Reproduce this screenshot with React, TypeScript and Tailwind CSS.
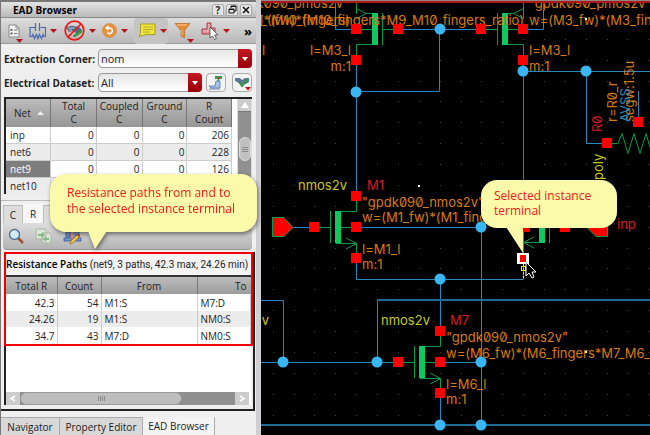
import type { ReactNode } from "react";

const sans = "font-['Open_Sans','Noto_Sans',sans-serif]";

const nets = [
  ["inp", "0", "0", "0", "206"],
  ["net6", "0", "0", "0", "228"],
  ["net9", "0", "0", "0", "126"],
  ["net10", "", "", "", ""],
];

const paths = [
  ["42.3", "54", "M1:S", "M7:D"],
  ["24.26", "19", "M1:S", "NM0:S"],
  ["34.7", "43", "M7:D", "NM0:S"],
];

function RedArrow({ low = false }: { low?: boolean }) {
  return (
    <svg viewBox="0 0 7 4" className={low ? "-ml-1 h-1 w-[7px] self-end" : "h-1 w-[7px]"}>
      <path d="M0 0h7L3.5 4z" fill="#b5121b" />
    </svg>
  );
}

function ReportIcon() {
  return (
    <svg viewBox="0 0 12 14" className="h-3.5 w-3">
      <path d="M1 1h7l3 3v9H1z" fill="#f2f2f2" stroke="#888" />
      <path d="M8 1v3h3" fill="none" stroke="#888" />
      <path d="M2.500 5h2v2h-2zM2.500 8.500h2v2h-2z" fill="#666" />
      <path d="M6 6h3.500M6 9.500h3.500" stroke="#777" />
    </svg>
  );
}

function ParasiticIcon() {
  return (
    <svg viewBox="0 0 17 18" className="h-[18px] w-[17px]">
      <path
        d="M6.500 1v8M10.500 1v8M6 5.500H1v9h2l1-2 1.500 4 2-4 1.500 4 1.500-4 2 4 1.500-4 .5 2h2v-9h-5"
        fill="none"
        stroke="#4467b0"
        strokeWidth="1.200"
      />
    </svg>
  );
}

function NoProbeIcon() {
  return (
    <svg viewBox="0 0 21 21" className="h-[21px] w-[21px]">
      <path d="M2 8q3-3 8-2l5 1 3 3-5 4-4-3-4 1z" fill="#52708c" />
      <path d="M4 8h7M5 10h3" stroke="#a9c3dd" />
      <path d="M9 16l8-6 1 2-7 5z" fill="#39a845" stroke="#187028" strokeWidth=".6" />
      <circle cx="10.500" cy="10.500" r="9.300" fill="none" stroke="#f31414" strokeWidth="1.700" />
      <path d="M4 17L17 4" stroke="#f31414" strokeWidth="1.700" />
    </svg>
  );
}

function RefreshIcon() {
  return (
    <svg viewBox="0 0 15 15" className="h-[15px] w-[15px]">
      <circle cx="7.500" cy="7.500" r="7" fill="#e79238" stroke="#c98b50" strokeWidth=".7" />
      <path d="M4.500 5h3.500a2.800 2.800 0 1 1-2.600 4.500" fill="none" stroke="#fff" strokeWidth="1.700" />
      <path d="M6.500 2v6L3 5z" fill="#fff" />
    </svg>
  );
}

function NoteIcon() {
  return (
    <svg viewBox="0 0 18 15" className="h-[15px] w-[18px]">
      <path d="M2.500 1h14.500v10.500H8l-7 2 1.500-3z" fill="#f2e53b" stroke="#a69a28" />
      <path d="M5 4h10M5 6.500h10M5 9h7" stroke="#b7a92c" />
    </svg>
  );
}

function FunnelIcon() {
  return (
    <svg viewBox="0 0 17 18" className="h-[18px] w-[17px]">
      <path d="M1 1.500h15l-5.500 7V16L7 14V8.500z" fill="#e58935" stroke="#b8702f" strokeWidth=".8" />
      <path d="M3 3h10" stroke="#ffd09a" />
      <path d="M8 8v5" stroke="#ffc184" />
    </svg>
  );
}

function SelectIcon() {
  return (
    <svg viewBox="0 0 18 18" className="h-[18px] w-[18px]">
      <path d="M6 1h4v5h4v6H1V7h5z" fill="#dd9298" stroke="#a93c48" />
      <path d="M2 9h9M8 2v6" stroke="#efc0c4" />
      <path d="M9 5v11l2.500-2 2 3.500 2-1-2-3.500h3.500z" fill="#fff" stroke="#444" strokeWidth=".8" />
    </svg>
  );
}

function ExportIcon() {
  return (
    <svg viewBox="0 0 16 16" className="h-4 w-4">
      <path d="M7 1h7v3H7z" fill="#3c9b50" />
      <path d="M9 2h3v2H9z" fill="#d33c3c" />
      <path d="M10.500 4v3" stroke="#3b8048" strokeWidth="1.500" />
      <path d="M8 6h4v7H3l-2-2h6z" fill="#a9c4e8" stroke="#5378a8" strokeWidth=".8" />
      <path d="M1 14h11" stroke="#6f86a5" />
    </svg>
  );
}

function CheckIcon() {
  return (
    <svg viewBox="0 0 17 16" className="h-4 w-[17px]">
      <path d="M1 3h5l2 2 3-2h4v4l-3 2H7L1 6z" fill="#5d7898" />
      <path d="M5 7l3 4 6-7" fill="none" stroke="#2f9845" strokeWidth="2" />
      <path d="M11 12h6l-3 3.500z" fill="#c1121b" />
    </svg>
  );
}

function SearchIcon() {
  return (
    <svg viewBox="0 0 16 16" className="h-4 w-4">
      <path d="M10 10l5 5" stroke="#98542d" strokeWidth="2.500" />
      <circle cx="6.500" cy="6.500" r="5" fill="#cfeafa" stroke="#50708f" strokeWidth="1.300" />
      <path d="M4 5q1-2 3-2" fill="none" stroke="#fff" />
    </svg>
  );
}

function CompareIcon() {
  return (
    <svg viewBox="0 0 17 16" className="h-4 w-[17px]">
      <path d="M1 1h8l2 2v8H1zM7 5h7l2 2v8H7z" fill="#dde5da" stroke="#a8b5a6" />
      <path d="M3 6h4V4l3 3-3 3V8H3zM14 10h-3V8l-3 3 3 3v-2h3z" fill="#83b987" />
    </svg>
  );
}

function EditIcon() {
  return (
    <svg viewBox="0 0 19 18" className="h-[18px] w-[19px]">
      <path d="M3 2h4v8H3zM12 2h4v8h-4zM1 11h17v3H1z" fill="#7195cf" stroke="#4567a5" />
      <path d="M8 1h2v11H8z" fill="#d7e4f5" stroke="#b93136" strokeWidth=".8" />
      <path d="M7 17l1-3 7-7 2 2-7 7z" fill="#f4c939" stroke="#9d6927" strokeWidth=".7" />
      <path d="M14 8l1-1 2 2-1 1z" fill="#d32626" />
    </svg>
  );
}

function ToolButton({ label, children, active = false }: { label: string; children: ReactNode; active?: boolean }) {
  return (
    <button
      aria-label={label}
      className={
        active
          ? "flex h-[26px] w-[34px] items-center justify-between rounded bg-[#c4c4c4] px-px pl-1"
          : "flex h-6 items-center gap-1"
      }
    >
      {children}
    </button>
  );
}

function Dropdown({ id, value, options, grow = false }: { id: string; value: string; options: string[]; grow?: boolean }) {
  return (
    <div className={grow ? "relative h-[19px] flex-1" : "relative h-[19px] w-[104px]"}>
      <select
        id={id}
        defaultValue={value}
        className="block h-full w-full appearance-none rounded border border-[#999] bg-linear-to-b from-[#e6e6e6] to-white px-[2px] text-[11px] leading-4 text-[#222]"
      >
        {options.map((o) => (
          <option key={o}>{o}</option>
        ))}
      </select>
      <span className="pointer-events-none absolute inset-y-0 right-0 flex w-3.5 items-center justify-center rounded-r bg-linear-to-b from-[#c41820] to-[#97000a]">
        <svg viewBox="0 0 6 4" className="h-1 w-1.5">
          <path d="M0 0h6L3 4z" fill="#fff" />
        </svg>
      </span>
    </div>
  );
}

function Sidebar() {
  return (
    <aside className={`${sans} flex w-[256px] shrink-0 flex-col border-l border-[#777] bg-[#efefef] text-[10px] leading-4 text-[#222]`}>
      <div className="h-0.5 bg-[#777]" />
      <header className="flex h-4 items-center border-b border-[#888] bg-linear-to-b from-[#e4e4e4] to-[#b9b9b9] pr-1 pl-3">
        <h1 className="flex-1 text-[10px] font-bold text-black">EAD Browser</h1>
        <div className="flex gap-0.5">
          <button aria-label="Help" className="h-3 w-3 rounded-xs border border-[#aaa] bg-[#e5e5e5] text-[10px] leading-[10px] font-bold">?</button>
          <button aria-label="Float" className="flex h-3 w-3 items-center justify-center rounded-xs border border-[#aaa] bg-[#e5e5e5]">
            <svg viewBox="0 0 9 9" className="h-[9px] w-[9px]">
              <path d="M3 3V1h5v5H6M1 4h5v4H1zM3 1.500h5M1 4.500h5" fill="none" stroke="#111" />
            </svg>
          </button>
          <button aria-label="Close" className="flex h-3 w-3 items-center justify-center rounded-xs border border-[#aaa] bg-[#e5e5e5]">
            <svg viewBox="0 0 8 8" className="h-2 w-2">
              <path d="M1 1l6 6M7 1L1 7" stroke="#111" strokeWidth="1.500" />
            </svg>
          </button>
        </div>
      </header>

      <div className="flex h-[26px] items-center justify-between border-b border-[#999] bg-linear-to-b from-[#ddd] to-[#b8b8b8] pr-1 pl-[7px]">
        <ToolButton label="Report">
          <span className="flex h-full items-center">
            <ReportIcon />
            <RedArrow low />
          </span>
        </ToolButton>
        <ToolButton label="Parasitics">
          <ParasiticIcon />
          <RedArrow />
        </ToolButton>
        <ToolButton label="Disable probes">
          <NoProbeIcon />
          <RedArrow />
        </ToolButton>
        <ToolButton label="Refresh">
          <RefreshIcon />
          <RedArrow />
        </ToolButton>
        <ToolButton label="Notes" active>
          <NoteIcon />
          <RedArrow />
        </ToolButton>
        <ToolButton label="Filter">
          <span className="flex h-full items-center">
            <FunnelIcon />
            <RedArrow low />
          </span>
        </ToolButton>
        <ToolButton label="Select">
          <SelectIcon />
          <RedArrow />
        </ToolButton>
        <button aria-label="More" className="ml-2 h-5 text-[13px] leading-4 font-bold text-black">»</button>
      </div>

      <div className="flex flex-col gap-[5px] py-[5px] pr-1 pl-[3px]">
        <div className="flex items-center">
          <label htmlFor="corner" className="w-[94px] font-bold whitespace-nowrap">Extraction Corner:</label>
          <Dropdown id="corner" value="nom" options={["nom", "max", "min"]} grow />
        </div>
        <div className="flex items-center">
          <label htmlFor="dataset" className="w-[94px] font-bold whitespace-nowrap">Electrical Dataset:</label>
          <Dropdown id="dataset" value="All" options={["All", "None"]} />
          <span className="flex flex-1 justify-end gap-1.5">
            <button aria-label="Load dataset" className="flex h-[19px] w-5 items-center justify-center rounded border border-[#aaa] bg-[#f4f4f4]">
              <ExportIcon />
            </button>
            <button aria-label="Check dataset" className="flex h-[19px] w-5 items-center justify-center rounded border border-[#aaa] bg-[#f4f4f4]">
              <CheckIcon />
            </button>
          </span>
        </div>
      </div>

      <div className="mr-1 ml-[3px] flex h-[97px] shrink-0 overflow-hidden border-t-2 border-l-2 border-[#222] bg-white">
        <table className="flex-1 table-fixed border-collapse">
          <colgroup>
            <col className="w-[45px]" />
            <col className="w-[46px]" />
            <col className="w-[46px]" />
            <col className="w-[45px]" />
            <col className="w-[45px]" />
          </colgroup>
          <thead>
            <tr className="h-7 bg-linear-to-b from-[#bcbcbc] to-[#969696] text-[10px] leading-[13px]">
              <th className="border-r border-[#777] font-normal">
                <span className="flex items-center justify-between pr-1.5 pl-2">
                  Net
                  <svg viewBox="0 0 7 4" className="h-1 w-[7px]"><path d="M0 4h7L3.500 0z" fill="#eee" /></svg>
                </span>
              </th>
              {["Total", "Coupled", "Ground"].map((h) => (
                <th key={h} className="border-r border-[#777] p-0 font-normal">{h}<br />C</th>
              ))}
              <th className="border-r border-[#777] p-0 font-normal">R<br />Count</th>
            </tr>
          </thead>
          <tbody>
            {nets.map((r, i) => (
              <tr key={r[0]} className={i % 2 ? "h-[17px] bg-[#ececec]" : "h-4 bg-white"}>
                {r.map((c, j) => (
                  <td
                    key={j}
                    className={
                      j === 0
                        ? i === 2
                          ? "border-r border-b border-[#ccc] bg-[#7d7d7d] p-0 pl-1 text-white"
                          : "border-r border-b border-[#ccc] p-0 pl-1"
                        : "border-r border-b border-[#ccc] p-0 pr-0.5 text-right"
                    }
                  >
                    {c}
                  </td>
                ))}
              </tr>
            ))}
          </tbody>
        </table>
        <div className="ml-[5px] flex w-[15px] flex-col items-center border-x border-[#ddd] bg-[#919191]">
          <span className="flex h-[13px] w-full items-center justify-center border-b border-[#777] bg-[#ccc]">
            <svg viewBox="0 0 8 6" className="h-1.5 w-2"><path d="M0 6h8L4 0z" fill="#fff" /></svg>
          </span>
          <span className="mt-[25px] flex h-6 w-3 flex-col items-center justify-center gap-px rounded-full border border-[#ddd] bg-[#c0c0c0]">
            <i className="h-px w-1.5 bg-[#888]" />
            <i className="h-px w-1.5 bg-[#888]" />
            <i className="h-px w-1.5 bg-[#888]" />
          </span>
        </div>
      </div>

      <div className="mt-1.5 border-t border-[#bbb]" />
      <div className="mt-[3px] flex h-[19px] items-end pl-0.5">
        <button className="h-[18px] w-5 border border-b-0 border-[#bbb] bg-[#ddd]">C</button>
        <button className="h-[19px] w-5 bg-[#f7f7f7]">R</button>
        <span className="h-[18px] w-5 border border-b-0 border-[#bbb] bg-[#ddd]" />
      </div>
      <div className="mr-1 ml-0.5 flex h-[27px] shrink-0 items-center gap-[11px] rounded-b border-b border-[#999] bg-linear-to-b from-[#ddd] to-[#b4b4b4] pl-[5px]">
        <button aria-label="Search"><SearchIcon /></button>
        <button aria-label="Compare"><CompareIcon /></button>
        <button aria-label="Edit"><EditIcon /></button>
      </div>

      <div className="mt-0.5 mr-px mb-1.5 flex min-h-0 flex-1 flex-col border-r-2 border-b-2 border-[#222] pb-1 pl-[3px]">
        <section className="h-[94px] shrink-0 overflow-hidden border-2 border-[#f00000] bg-white">
          <h2 className="h-[23px] border-b-2 border-[#333] bg-[#f3f3f3] text-[10px] leading-5 font-normal whitespace-nowrap">
            <b className="font-semibold text-black">Resistance Paths</b>
            <span className="font-['Roboto','Open_Sans',sans-serif]"> (net9, 3 paths, 42.3 max, 24.26 min)</span>
          </h2>
          <table className="w-full table-fixed border-collapse">
            <colgroup>
              <col className="w-[51px]" />
              <col className="w-11" />
              <col className="w-24" />
              <col />
            </colgroup>
            <thead>
              <tr className="h-[17px] bg-linear-to-b from-[#bcbcbc] to-[#9c9c9c]">
                <th className="border-r border-[#777] p-0 font-normal">Total R</th>
                <th className="border-r border-[#777] p-0 font-normal">Count</th>
                <th className="border-r border-[#777] p-0 font-normal">From</th>
                <th className="p-0 pr-1 text-right font-normal">To</th>
              </tr>
            </thead>
            <tbody>
              {paths.map((r, i) => (
                <tr key={r[0]} className={i % 2 ? "h-4 bg-[#ececec]" : "h-[17px] bg-white"}>
                  {r.map((c, j) => (
                    <td key={j} className={j < 2 ? "border-r border-[#ccc] p-0 pr-0.5 text-right" : "border-r border-[#ccc] p-0 pl-[3px]"}>
                      {c}
                    </td>
                  ))}
                </tr>
              ))}
            </tbody>
          </table>
        </section>
        <div className="mr-0.5 flex flex-1 flex-col justify-end border-l-2 border-[#222] bg-white">
          <div className="mr-0.5 flex h-[13px] bg-[#8f8f8f]">
            <span className="flex w-3.5 items-center justify-center bg-[#ccc]">
              <svg viewBox="0 0 6 7" className="h-[7px] w-1.5"><path d="M5 1L1 3.500 5 6" fill="none" stroke="#fff" strokeWidth="1.500" /></svg>
            </span>
            <span className="flex w-[162px] items-center justify-center gap-px rounded-full border border-[#999] bg-[#bdbdbd]">
              {[0, 1, 2, 3].map((n) => <i key={n} className="h-[5px] w-px bg-[#888]" />)}
            </span>
            <span className="ml-auto flex w-3.5 items-center justify-center bg-[#ccc]">
              <svg viewBox="0 0 6 7" className="h-[7px] w-1.5"><path d="M1 1l4 2.500L1 6" fill="none" stroke="#fff" strokeWidth="1.500" /></svg>
            </span>
          </div>
        </div>
      </div>

      <nav className="flex h-[18px] shrink-0 text-[10px]">
        <button className="w-[59px] border-t border-r border-[#aaa] bg-[#d8d8d8]">Navigator</button>
        <button className="w-[83px] border-t border-r border-[#aaa] bg-[#d8d8d8]">Property Editor</button>
        <button className="w-[72px] border-r border-[#aaa] bg-[#f4f4f4]">EAD Browser</button>
      </nav>
    </aside>
  );
}

const dots: [number, number][] = [];
for (let i = 0; i < 19; i++) for (let j = 0; j < 20; j++) dots.push([Math.round(272.7 + i * 20.87), Math.round(18 + j * 20.87)]);

const junctions = [
  [440, 29], [356, 92], [523, 71], [586, 71], [481, 227], [440, 279],
  [283, 362], [377, 362], [481, 362], [440, 425], [481, 425],
];

const ports = [
  [356, 29], [356, 60], [398, 29], [481, 29], [523, 29], [523, 60],
  [356, 196], [314, 227], [356, 227], [356, 258],
  [440, 331], [398, 362], [440, 362], [440, 393],
  [607, 143], [638, 122], [525, 227], [565, 227],
];

function Nmos({ x, y }: { x: number; y: number }) {
  return (
    <g transform={`translate(${x} ${y})`} fill="none" stroke="#0a9a4c">
      <path d="M-37.500 .5H-26M-25.500-16v32M.5-31v15.500H-15M-15 .5H0M-20 16.500H.5M.5 16v15M-10 11l10.500 5.500L-10 22" />
      <path d="M-21-16h6v32h-6z" fill="#0bc860" stroke="none" />
    </g>
  );
}

function Schematic() {
  return (
    <svg
      viewBox="261 0 389 435"
      preserveAspectRatio="xMinYMin slice"
      className="block h-full min-w-0 flex-1 bg-black font-['Inter',sans-serif] text-[13px] [font-feature-settings:'zero']"
      role="img"
      aria-label="Schematic"
    >
      <g fill="#444">
        {dots.map(([x, y]) => <rect key={`${x}-${y}`} x={x} y={y} width="1" height="1" />)}
      </g>

      <g fill="none" stroke="#2788bf">
        <path d="M335.500 3v26.500H356M398 29.500h83M439.500 29v62.500H356M356.500 60v136M523 29.500h20.500V3" />
        <path d="M523.500 60v193M523 71.500H650M586.500 71v72.500H607M638.500 91v31" />
        <path d="M293 227.500h21M356 227.500h125.500V425M356.500 258v21.500H523.500V264M440.500 279v52" />
        <path d="M261 300.500h22.500V362M261 362.500h137M377.500 362v-62M440 362.500h41M440.500 393v32" />
      </g>
      <path d="M377 300H650M261 425H650" stroke="#1c6c98" strokeWidth="2" />

      <g fill="none" stroke="#0a9a4c">
        <path d="M356.500 3v11M356.500 8.500l9.500 5-9.500 5M366 13.500h12M382.500 13v32M382 29.500h16M356 29.500h16M378 44.500h-21.500V60" />
        <path d="M523.500 3v15M523.500 8.500l-10 5 10 5M502 13.500h12M497.500 13v32M481 29.500h16M508 29.500h15M508 44.500h15.500V60" />
        <path d="M607 143.500h11l4-10 6 20 6-20 6 20 6-20 6 20" />
        <path d="M549.500 211v32M545 242.500h-21.500M534 237l-10.500 5.500L534 248" />
      </g>
      <path d="M372 13h6v32h-6zM502 13h6v32h-6zM539 211h6v32h-6z" fill="#0bc860" />
      <Nmos x={356} y={227} />
      <Nmos x={440} y={362} />
      <path d="M272.500 217.500h11.500l9 10-9 9h-11.500z" fill="#f00" stroke="#0a9a4c" />
      <path d="M607.500 217.500H596l-9 10 9 9h11.500z" fill="#f00" stroke="#0a9a4c" />

      <g fill="#d97a14">
        <text x="349" y="8" textAnchor="end">"gpdk090_pmos2v"</text>
        <text x="350" y="25" textAnchor="end">)*(M7_(M10_fingers)</text>
        <text x="524" y="25" textAnchor="end">)*(fw)*(M10_fingers*M9_M10_fingers_ratio)</text>
        <text x="262" y="55">l</text>
        <text x="351" y="55" textAnchor="end">l=M3_l</text>
        <text x="351" y="71" textAnchor="end">m:1</text>
        <text x="529" y="8">"gpdk090_pmos2v"</text>
        <text x="529" y="25">w=(M3_fw)*(M3_fingers</text>
        <text x="529" y="55">l=M3_l</text>
        <text x="529" y="71">m:1</text>
        <text x="362" y="207">"gpdk090_nmos2v"</text>
        <text x="362" y="222">w=(M1_fw)*(M1_fingers</text>
        <text x="362" y="254">l=M1_l</text>
        <text x="362" y="269">m:1</text>
        <text x="446" y="342">"gpdk090_nmos2v"</text>
        <text x="446" y="358">w=(M6_fw)*(M6_fingers*M7_M6_</text>
        <text x="446" y="389">l=M6_l</text>
        <text x="446" y="404">m:1</text>
        <text transform="translate(617 122) rotate(-90)">r=R0_r</text>
        <text transform="translate(634 122) rotate(-90)">segw:1.5u</text>
      </g>
      <path d="M261 .5H650" stroke="#888" />
      <path d="M261 2H650" stroke="#b01616" strokeWidth="2" />
      <g fill="#fff">
        <rect x="418" y="185" width="2" height="2" />
        <rect x="585" y="18" width="2" height="2" />
        <rect x="585" y="351" width="2" height="2" />
      </g>
      <text transform="translate(630 122) rotate(-90)" fill="#2788bf">AVSS</text>
      <g fill="#c9c91c">
        <text x="298" y="190">nmos2v</text>
        <text x="381" y="325">nmos2v</text>
        <text x="269" y="325" textAnchor="end">.v</text>
        <text transform="translate(603 180) rotate(-90)">poly</text>
      </g>
      <g fill="#d81c24">
        <text x="367" y="190">M1</text>
        <text x="450" y="325">M7</text>
        <text x="617" y="229">inp</text>
        <text transform="translate(602 132) rotate(-90)">R0</text>
      </g>

      <g fill="#f00">
        {ports.map(([x, y]) => <rect key={`${x}-${y}`} x={x - 5} y={y - 5} width="10" height="10" />)}
      </g>
      <g fill="#38b6f5">
        {junctions.map(([x, y]) => <circle key={`${x}-${y}`} cx={x} cy={y} r="5.500" />)}
      </g>

      <path d="M523.500 264v15" stroke="#e8e020" strokeDasharray="2 2" />
      <rect x="521.500" y="266.500" width="4" height="4" fill="none" stroke="#e8e020" />
      <rect x="517" y="253" width="12" height="11" fill="#fff" />
      <rect x="520" y="255" width="6" height="7" fill="#f00" />
      <path d="M526 262v14l3-3 3 5 2-1-2-5h4z" fill="#000" stroke="#fff" />
    </svg>
  );
}

export default function App() {
  return (
    <main className="relative flex h-screen overflow-hidden bg-[#c8c8cc]">
      <Sidebar />
      <div className="w-[5px] shrink-0 bg-[#cfcfd4]" />
      <Schematic />

      <div className={`${sans} absolute top-[174px] left-[50px] h-[58px] w-[207px] rounded-2xl bg-[#fafaaa] pt-[11px] pl-[17px] text-[12px] leading-4 whitespace-nowrap text-[#f01818] drop-shadow-[1px_2px_2px_rgba(0,0,0,0.5)]`}>
        Resistance paths from and to
        <br />
        the selected instance terminal
        <svg viewBox="0 0 20 19" className="absolute top-[57px] left-[38px] h-[19px] w-5">
          <path d="M0 0h19L7 18z" fill="#fafaaa" />
        </svg>
      </div>

      <div className={`${sans} absolute top-[180px] left-[481px] h-12 w-[136px] rounded-2xl bg-[#fafaaa] pt-2 pl-[13px] text-[12px] leading-[15px] whitespace-nowrap text-[#f01818]`}>
        Selected instance
        <br />
        terminal
        <svg viewBox="0 0 20 26" className="absolute top-[47px] left-[25px] h-[26px] w-5">
          <path d="M0 0h17v26z" fill="#fafaaa" />
        </svg>
      </div>
    </main>
  );
}
